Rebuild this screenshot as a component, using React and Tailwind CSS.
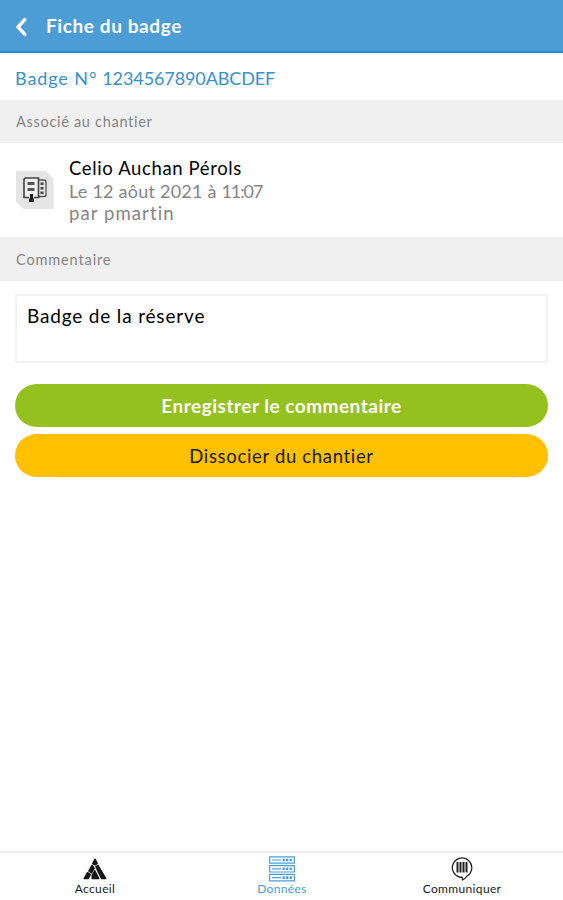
import { useState } from 'react';

// ─── Icons ───────────────────────────────────────────────────────────────────
function BackIcon() {
  return (
    <svg width="12" height="20" viewBox="0 0 12 20" fill="none" stroke="currentColor" strokeWidth="3.4" strokeLinecap="round" strokeLinejoin="round">
      <path d="M9.8 2.6 3 10l6.8 7.4" />
    </svg>
  );
}

function SiteIcon() {
  return (
    <svg className="shrink-0" width="38" height="38" viewBox="0 0 38 38" fill="none">
      <path d="M1.5 0H30l7.500 7.500V38H7.500L0 30.500v-29Q0 0 1.500 0z" fill="#e5e5e5" />
      <path d="M23 9h5q2 0 2 2v12.500q0 2-2 2h-5" stroke="#555" strokeWidth="1.3" />
      <path d="M8 26.500V9q0-2 2-2h12.500v19.500" fill="#f0f0f0" stroke="#444" strokeWidth="1.6" />
      <path d="M7.300 26.500H13M18 26.500h5.500" stroke="#444" strokeWidth="1.6" />
      <path d="M11.500 12.500h7M11.500 18.500h7" stroke="#555" strokeWidth="3" />
      <path d="M24.500 11.500h3V14h-3zM24.500 16h3v2.500h-3zM24.500 20.500h3V23h-3z" fill="#444" />
      <path d="M14 23h3v4.500h1V31h-5v-3.500h1z" fill="#222" />
    </svg>
  );
}

function HomeIcon() {
  return (
    <svg width="24" height="22" viewBox="0 0 24 22" fill="#161616" stroke="#161616" strokeWidth="1.4" strokeLinejoin="round">
      <path d="m12 1.200 2.300 4.300-1.800 1.200h-1L9.700 5.500z" />
      <path d="m9 7.300 2.200 3.200-2.700 4.500-2.700-2z" />
      <path d="m12.800 8.800 2.200-1.500 7.800 13.200h-4.300z" />
      <path d="m4.500 14.500 3 2-2.200 4H1.200z" />
      <path d="m11.800 12.800 4 7.700H9.200V17z" />
    </svg>
  );
}

function DataIcon() {
  return (
    <svg width="26" height="26" viewBox="0 0 26 26" fill="none" stroke="currentColor" strokeWidth="1.2">
      <path d="M.7.800h24.600v6.400H.7zM.7 9.600h24.600V16H.7zM.7 18.400h24.600v6.400H.7z" />
      <path d="M3 4h9M3 12.800h9M3 21.600h9" />
      <path d="M13.500 4H23M13.500 12.800H23M13.500 21.600H23" strokeWidth="2.6" strokeDasharray="2.3 1.2" />
    </svg>
  );
}

function ChatIcon() {
  return (
    <svg width="22" height="24" viewBox="0 0 22 24" fill="none" stroke="#222" strokeLinejoin="round">
      <path d="M8.500 20A9.700 9.700 0 1 1 16 19q-2 3-4.500 4 0-2-.500-2.800-1.200.100-2.500-.200z" strokeWidth="1.300" />
      <path d="M6.500 5v10.500M9.500 5v10.500M12.500 5v10.500M15.500 5v10.500" strokeWidth="2" />
    </svg>
  );
}

// ─── Shared ──────────────────────────────────────────────────────────────────
function Tab({ className, icon, children }) {
  return (
    <button type="button" className={`flex flex-col items-center ${className}`}>
      <span className="flex h-[27px] items-center justify-center">{icon}</span>
      <span className="text-[12px] leading-[14px] tracking-[0.35px]">{children}</span>
    </button>
  );
}

// ─── Page ────────────────────────────────────────────────────────────────────
export default function App() {
  const [comment, setComment] = useState('Badge de la réserve');

  return (
    <div className="flex h-[900px] w-[563px] flex-col bg-white font-['Lato',sans-serif] text-[18.5px] text-[#1a1a1a]">
      <header className="flex h-[53px] items-center gap-[19px] border-b-2 border-[#2290d0] bg-[#4c9dd5] pl-[15px] pt-0.5 text-white">
        <BackIcon />
        <h1 className="text-[19px] font-bold tracking-[0.6px]">Fiche du badge</h1>
      </header>

      <main className="flex flex-1 flex-col">
        <p className="flex h-[47px] items-center gap-[5px] px-[15px] pt-1 text-[18px] text-[#3691cd]">
          <span className="tracking-[0.9px]">Badge N°</span>
          <span className="tracking-[-0.1px]">1234567890ABCDEF</span>
        </p>

        <h2 className="flex h-[43px] items-center bg-[#f0f0f0] px-4 pt-px text-[14.5px] tracking-[0.7px] text-[#858585]">
          Associé au chantier
        </h2>
        <div className="flex h-[94px] items-center gap-[15px] px-4">
          <SiteIcon />
          <div className="pt-0.5 leading-[22.5px]">
            <p className="tracking-[0.63px] text-black">Celio Auchan Pérols</p>
            <p className="text-[18px] tracking-[0.23px] text-[#858585]">
              Le 12 aôut 2021 à <span className="tracking-[-1.1px]">11:07</span>
            </p>
            <p className="tracking-[1.1px] text-[#858585]">par pmartin</p>
          </div>
        </div>

        <h2 className="flex h-[44px] items-center bg-[#f0f0f0] px-4 pt-0.5 text-[14.5px] tracking-[0.87px] text-[#858585]">
          Commentaire
        </h2>
        <div className="flex flex-col px-[15px] pt-[13px]">
          <textarea
            value={comment}
            onChange={(e) => setComment(e.target.value)}
            className="h-[69px] w-full resize-none border-2 border-[#f2f2f2] px-[10px] py-[8px] text-[19px] leading-6 tracking-[0.83px] text-black outline-none"
          />
          <button type="button" className="mt-[21px] h-[43px] rounded-full bg-[#95c11f] pt-px text-[19px] font-bold tracking-[0.5px] text-white">
            Enregistrer le commentaire
          </button>
          <button type="button" className="mt-[7px] h-[43px] rounded-full bg-[#ffc000] pt-0.5 tracking-[0.67px]">
            Dissocier du chantier
          </button>
        </div>
      </main>

      <nav className="flex h-[49px] border-t-2 border-[#eeeeee] pt-[2px]">
        <Tab className="w-[190px]" icon={<HomeIcon />}>Accueil</Tab>
        <Tab className="w-[184px] text-[#4c9dd5]" icon={<DataIcon />}>Données</Tab>
        <Tab className="w-[176px]" icon={<ChatIcon />}>Communiquer</Tab>
      </nav>
    </div>
  );
}
